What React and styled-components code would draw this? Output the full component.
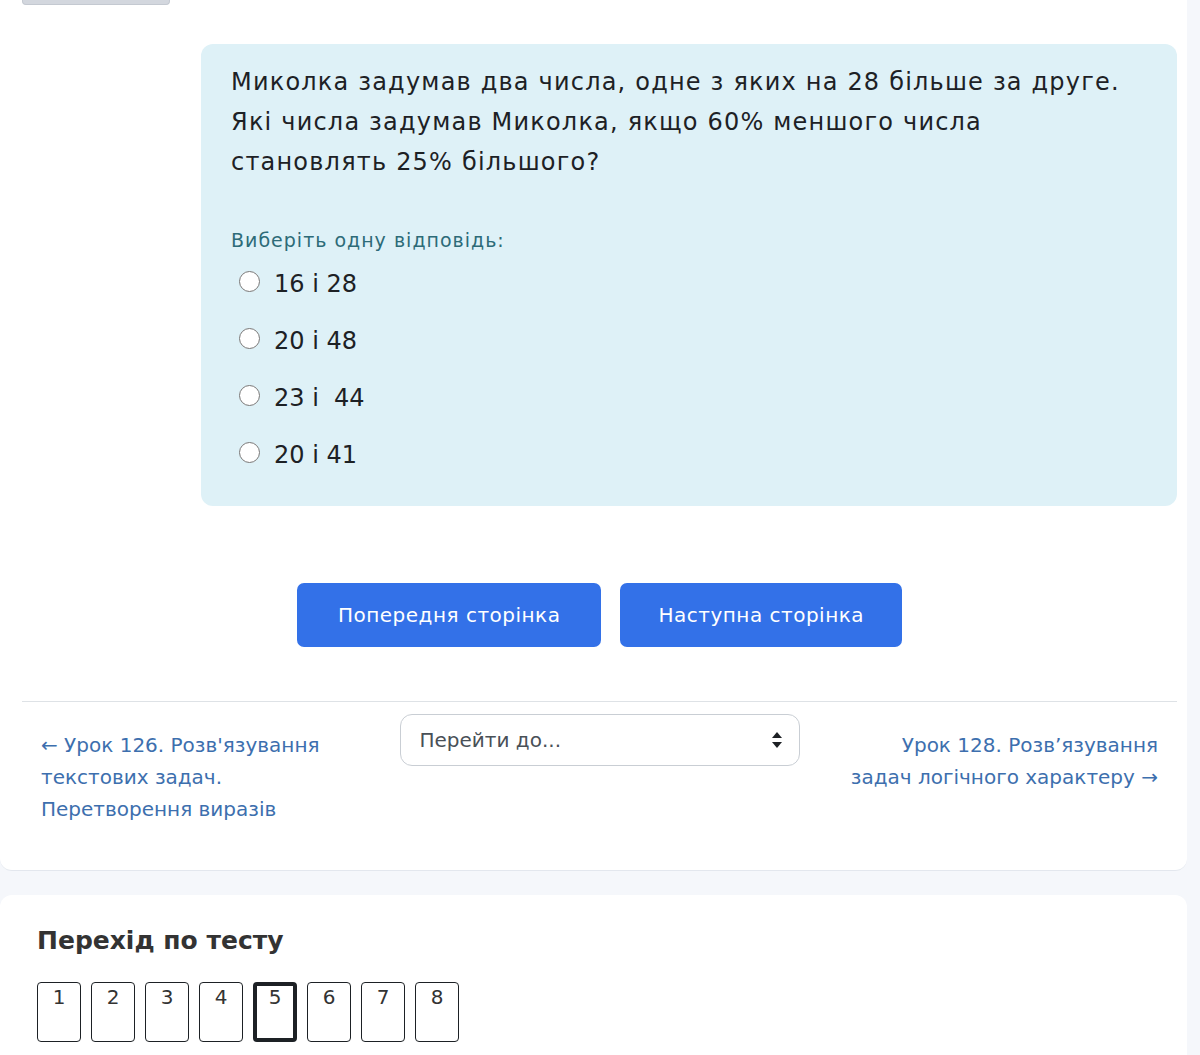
import React from "react";
import styled, { createGlobalStyle } from "styled-components";

const GlobalStyle = createGlobalStyle`
  body {
    margin: 0;
    background-color: #f5f7fb;
    font-family: "DejaVu Sans", "Noto Sans", sans-serif;
    color: #1d2125;
  }
`;

const Page = styled.div`
  width: 1200px;
  padding-right: 13px;
  box-sizing: border-box;
`;

const Card = styled.div`
  background-color: #fff;
  border-radius: 0 0 12px 12px;
  border-bottom: 1px solid #e3e7ee;
  padding: 0 10px 0 22px;
  display: flex;
  flex-direction: column;
`;

const StubButton = styled.div`
  width: 148px;
  height: 5px;
  background-color: #d3d7de;
  border: 1px solid #c4c9d1;
  border-top: none;
  border-radius: 0 0 4px 4px;
  box-sizing: border-box;
`;

const QuestionRow = styled.div`
  display: flex;
  margin-top: 39px;
`;

const InfoColumn = styled.div`
  width: 179px;
  flex-shrink: 0;
`;

const QuestionBox = styled.div`
  flex: 1;
  background-color: #def1f7;
  border-radius: 12px;
  padding: 18px 30px 29px 30px;
`;

const QuestionText = styled.p`
  margin: 0;
  font-size: 24px;
  line-height: 40px;
  letter-spacing: 1.2px;
  color: #1d2125;
`;

const Prompt = styled.div`
  margin-top: 47px;
  font-size: 19px;
  letter-spacing: 1px;
  color: #2d6b78;
`;

const Answers = styled.div`
  display: flex;
  flex-direction: column;
  gap: 13px;
  margin-top: 11px;
  padding-left: 8px;
`;

const Answer = styled.label`
  display: flex;
  align-items: center;
  gap: 14px;
  font-size: 24px;
  line-height: 44px;
  color: #1d2125;
`;

const Radio = styled.input`
  width: 21px;
  height: 21px;
  margin: -6px 0 0 0;
`;

const ButtonRow = styled.div`
  display: flex;
  justify-content: center;
  gap: 19px;
  margin-top: 77px;
`;

const NavButton = styled.button`
  height: 64px;
  padding: 0 ${(p) => p.$px}px;
  background-color: #3371e8;
  color: #fff;
  border: none;
  border-radius: 7px;
  font-family: inherit;
  font-size: 20px;
  letter-spacing: 0.5px;
  cursor: pointer;
`;

const Divider = styled.hr`
  margin: 54px 0 0 0;
  border: none;
  border-top: 1px solid #dee2e6;
`;

const ActivityNav = styled.div`
  display: flex;
  align-items: flex-start;
  padding: 12px 0 45px 0;
`;

const SideLink = styled.a`
  flex: 1;
  padding: ${(p) => (p.$align === "right" ? "15px 19px 0 43px" : "15px 43px 0 19px")};
  font-size: 20px;
  line-height: 32px;
  color: #3d6fae;
  text-decoration: none;
  text-align: ${(p) => p.$align};
`;

const Select = styled.div`
  width: 400px;
  height: 52px;
  box-sizing: border-box;
  border: 1px solid #c9ced4;
  border-radius: 12px;
  display: flex;
  align-items: center;
  justify-content: space-between;
  padding: 0 16px 0 19px;
  font-size: 20px;
  color: #495057;
`;

const Caret = styled.svg`
  width: 12px;
  height: 18px;
`;

const BlockCard = styled.div`
  margin-top: 24px;
  background-color: #fff;
  border-radius: 12px 12px 0 0;
  padding: 31px 37px 60px 37px;
`;

const BlockTitle = styled.h3`
  margin: 0;
  font-size: 25px;
  font-weight: 700;
  color: #333;
`;

const QuizNav = styled.div`
  display: flex;
  gap: 10px;
  margin-top: 27px;
`;

const QuizButton = styled.div`
  width: 44px;
  height: 60px;
  box-sizing: border-box;
  border: ${(p) => (p.$current ? "4px solid #1d2125" : "1px solid #1d2125")};
  border-radius: 4px;
  display: flex;
  justify-content: center;
  padding-top: ${(p) => (p.$current ? "0px" : "3px")};
  font-size: 20px;
  line-height: 22px;
  color: #333;
`;

const answers = ["16 і 28", "20 і 48", "23 і  44", "20 і 41"];

export default function App() {
  return (
    <Page>
      <GlobalStyle />
      <Card>
        <StubButton />
        <QuestionRow>
          <InfoColumn />
          <QuestionBox>
            <QuestionText>
              Миколка задумав два числа, одне з яких на 28 більше за друге. Які
              числа задумав Миколка, якщо 60% меншого числа становлять 25%
              більшого?
            </QuestionText>
            <Prompt>Виберіть одну відповідь:</Prompt>
            <Answers>
              {answers.map((a) => (
                <Answer key={a}>
                  <Radio type="radio" name="q" />
                  <span style={{ whiteSpace: "pre" }}>{a}</span>
                </Answer>
              ))}
            </Answers>
          </QuestionBox>
        </QuestionRow>
        <ButtonRow>
          <NavButton $px={41}>Попередня сторінка</NavButton>
          <NavButton $px={38}>Наступна сторінка</NavButton>
        </ButtonRow>
        <Divider />
        <ActivityNav>
          <SideLink $align="left">
            ← Урок 126. Розв'язування текстових задач. Перетворення виразів
          </SideLink>
          <Select>
            <span>Перейти до...</span>
            <Caret viewBox="0 0 12 18">
              <path d="M6 1 L11 7 H1 Z" fill="#1d2125" />
              <path d="M6 17 L11 11 H1 Z" fill="#1d2125" />
            </Caret>
          </Select>
          <SideLink $align="right">
            Урок 128. Розв’язування задач логічного характеру →
          </SideLink>
        </ActivityNav>
      </Card>
      <BlockCard>
        <BlockTitle>Перехід по тесту</BlockTitle>
        <QuizNav>
          {[1, 2, 3, 4, 5, 6, 7, 8].map((n) => (
            <QuizButton key={n} $current={n === 5}>
              {n}
            </QuizButton>
          ))}
        </QuizNav>
      </BlockCard>
    </Page>
  );
}
